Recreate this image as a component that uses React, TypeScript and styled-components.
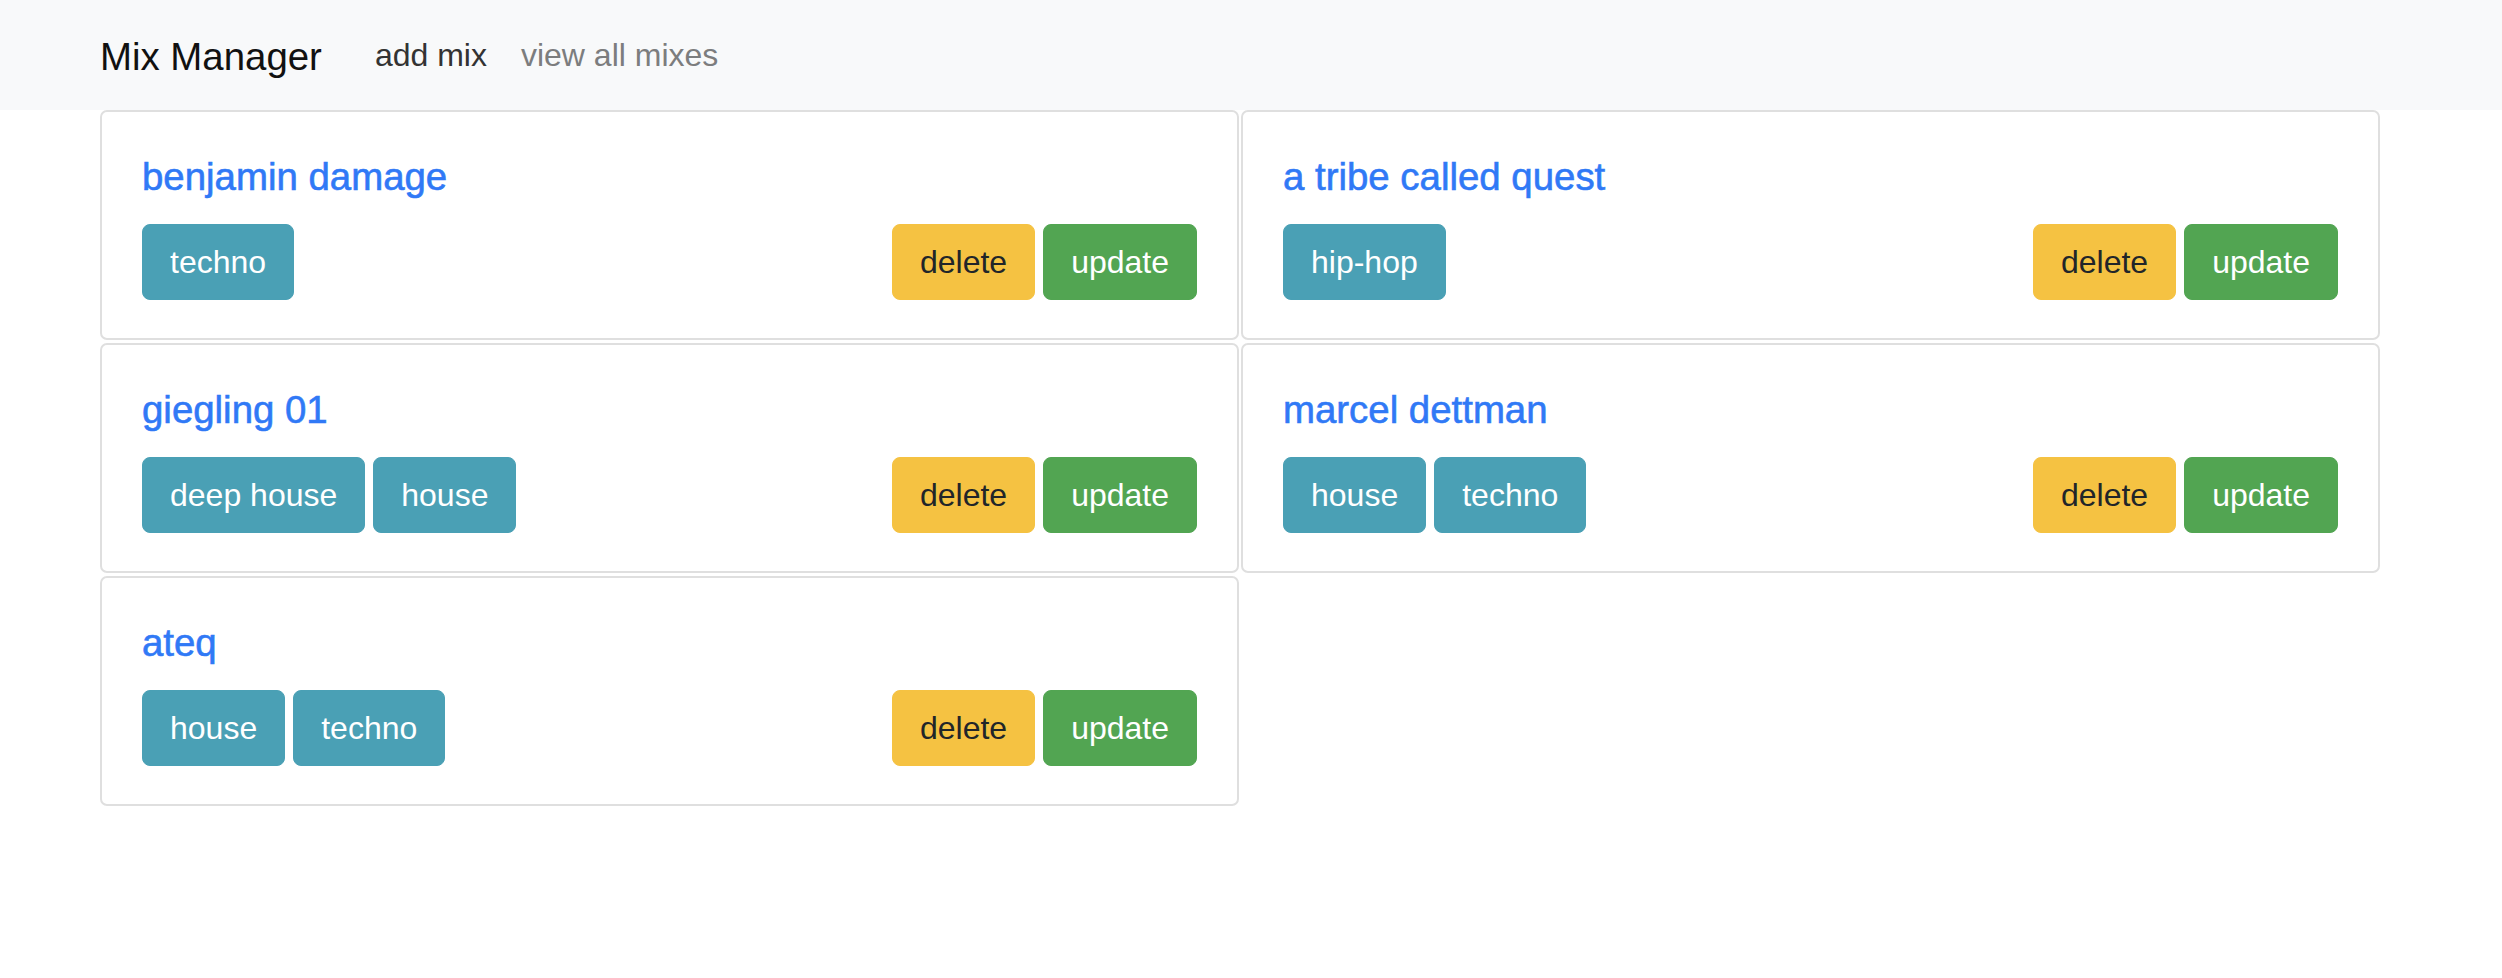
import React from "react";
import styled, { createGlobalStyle } from "styled-components";

const GlobalStyle = createGlobalStyle`
  html, body {
    margin: 0;
    padding: 0;
    background: #ffffff;
  }
  body {
    font-family: "Liberation Sans", Arial, Helvetica, sans-serif;
    color: #212529;
  }
  * { box-sizing: border-box; }
`;

const NavBar = styled.nav`
  height: 110px;
  background: #f8f9fa;
  display: flex;
  align-items: center;
  padding: 0 0 0 100px;
`;

const Brand = styled.a`
  font-size: 38.4px;
  line-height: 1.2;
  color: #111111;
  text-decoration: none;
  margin-right: 36px;
  padding-top: 4px;
`;

const NavLink = styled.a<{ $active?: boolean }>`
  font-size: 32px;
  line-height: 1.5;
  padding: 0 17px;
  color: ${(p) => (p.$active ? "#333333" : "#7c7d7e")};
  text-decoration: none;
`;

const Grid = styled.main`
  display: grid;
  grid-template-columns: 1139px 1139px;
  column-gap: 2px;
  row-gap: 3px;
  padding-left: 100px;
`;

const Card = styled.section`
  border: 2px solid #dfdfdf;
  border-radius: 7px;
  background: #ffffff;
  padding: 42px 40px 0 40px;
  height: 230px;
  display: flex;
  flex-direction: column;
`;

const Title = styled.h4`
  margin: 0 0 24px 0;
  font-size: 38.4px;
  line-height: 46px;
  font-weight: 400;
  -webkit-text-stroke: 0.6px #3079f6;
  color: #3079f6;
`;

const Row = styled.div`
  display: flex;
  justify-content: space-between;
  align-items: center;
`;

const Group = styled.div`
  display: flex;
  gap: 8px;
`;

const variants = {
  info: { bg: "#4aa0b5", fg: "#ffffff" },
  warning: { bg: "#f5c242", fg: "#212529" },
  success: { bg: "#52a552", fg: "#ffffff" },
};

const Button = styled.button<{ $variant: keyof typeof variants }>`
  font-family: inherit;
  font-size: 32px;
  line-height: 48px;
  height: 76px;
  padding: 0 27px;
  border: 1.6px solid ${(p) => variants[p.$variant].bg};
  border-radius: 8px;
  background: ${(p) => variants[p.$variant].bg};
  color: ${(p) => variants[p.$variant].fg};
  cursor: pointer;
`;

const mixes = [
  { name: "benjamin damage", tags: ["techno"] },
  { name: "a tribe called quest", tags: ["hip-hop"] },
  { name: "giegling 01", tags: ["deep house", "house"] },
  { name: "marcel dettman", tags: ["house", "techno"] },
  { name: "ateq", tags: ["house", "techno"] },
];

export default function App() {
  return (
    <>
      <GlobalStyle />
      <NavBar>
        <Brand href="#">Mix Manager</Brand>
        <NavLink href="#" $active>
          add mix
        </NavLink>
        <NavLink href="#">view all mixes</NavLink>
      </NavBar>
      <Grid>
        {mixes.map((m) => (
          <Card key={m.name}>
            <Title>{m.name}</Title>
            <Row>
              <Group>
                {m.tags.map((t) => (
                  <Button key={t} $variant="info">
                    {t}
                  </Button>
                ))}
              </Group>
              <Group>
                <Button $variant="warning">delete</Button>
                <Button $variant="success">update</Button>
              </Group>
            </Row>
          </Card>
        ))}
      </Grid>
    </>
  );
}
